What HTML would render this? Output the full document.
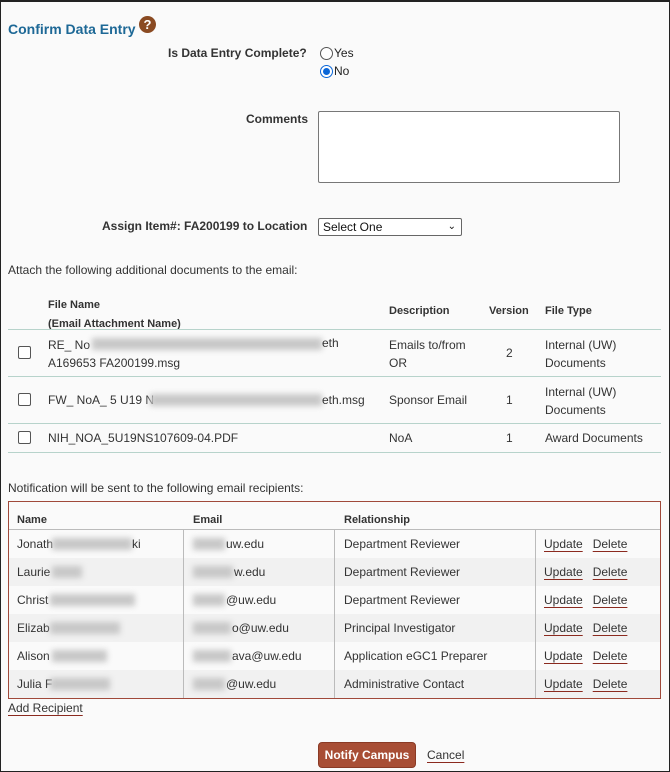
<!DOCTYPE html>
<html><head><style>
*{margin:0;padding:0;box-sizing:border-box}
body{width:670px;height:772px;background:#fafafa;font-family:"Liberation Sans",Arial,sans-serif;font-size:12px;color:#333;position:relative;overflow:hidden}
.frame{position:absolute;left:0;top:0;width:670px;height:772px;border:1px solid #222;border-top:2px solid #222}
.a{position:absolute;white-space:nowrap}
.b{font-weight:bold}
.blur{position:absolute;background:#c8c8c8;filter:blur(3px);height:12px}
.radio{position:absolute;width:13px;height:13px;border:1px solid #555;border-radius:50%;background:#fff}
.cb{position:absolute;width:13px;height:13px;border:1px solid #555;border-radius:2px;background:#fff}
.hl{position:absolute;height:1px;background:#b7d3cb;left:8px;width:653px}
.lnk{color:#333;text-decoration:underline;text-decoration-color:#8b2a1f;text-underline-offset:3px}
.vl{position:absolute;width:1px;background:#bbb}
</style></head><body>
<div class="frame"></div>
<div class="a b" style="left:8px;top:21px;font-size:14px;color:#1d6896">Confirm Data Entry</div>
<div class="a" style="left:139px;top:16px;width:17px;height:17px;border-radius:50%;background:#8a4a22;color:#fff;font-weight:bold;font-size:13px;text-align:center;line-height:17px">?</div>

<div class="a b" style="left:168px;top:46px">Is Data Entry Complete?</div>
<div class="radio" style="left:320px;top:47px"></div>
<div class="a" style="left:334px;top:46px;color:#222">Yes</div>
<div class="radio" style="left:320px;top:65px;border:1px solid #0a66d8;background:#fff"><div style="position:absolute;left:2px;top:2px;width:7px;height:7px;border-radius:50%;background:#0a66d8"></div></div>
<div class="a" style="left:334px;top:64px;color:#222">No</div>

<div class="a b" style="left:246px;top:112px">Comments</div>
<div class="a" style="left:318px;top:111px;width:302px;height:72px;border:1px solid #777;border-radius:2px;background:#fff"></div>

<div class="a b" style="left:102px;top:219px">Assign Item#: FA200199 to Location</div>
<div class="a" style="left:318px;top:218px;width:144px;height:18px;border:1px solid #666;border-radius:2px;background:#fff;color:#111;padding-left:4px;line-height:16px">Select One<span style="position:absolute;right:5px;top:0;font-size:10px">&#x2304;</span></div>

<div class="a" style="left:8px;top:263px">Attach the following additional documents to the email:</div>

<div class="a b" style="left:48px;top:296px;font-size:11px;line-height:19px">File Name<br>(Email Attachment Name)</div>
<div class="a b" style="left:389px;top:305px;font-size:11px">Description</div>
<div class="a b" style="left:489px;top:305px;font-size:11px">Version</div>
<div class="a b" style="left:545px;top:305px;font-size:11px">File Type</div>
<div class="hl" style="top:329px"></div>

<div class="cb" style="left:18px;top:346px"></div>
<div class="a" style="left:48px;top:336px;line-height:18px">RE_ No<br>A169653 FA200199.msg</div>
<div class="blur" style="left:92px;top:338px;width:230px"></div>
<div class="a" style="left:322px;top:336px">eth</div>
<div class="a" style="left:389px;top:336px;line-height:18px">Emails to/from<br>OR</div>
<div class="a" style="left:506px;top:346px">2</div>
<div class="a" style="left:545px;top:336px;line-height:18px">Internal (UW)<br>Documents</div>
<div class="hl" style="top:376px"></div>

<div class="cb" style="left:18px;top:393px"></div>
<div class="a" style="left:48px;top:393px">FW_ NoA_ 5 U19 N</div>
<div class="blur" style="left:150px;top:394px;width:172px"></div>
<div class="a" style="left:322px;top:393px">eth.msg</div>
<div class="a" style="left:389px;top:393px">Sponsor Email</div>
<div class="a" style="left:506px;top:393px">1</div>
<div class="a" style="left:545px;top:383px;line-height:18px">Internal (UW)<br>Documents</div>
<div class="hl" style="top:423px"></div>

<div class="cb" style="left:18px;top:431px"></div>
<div class="a" style="left:48px;top:431px">NIH_NOA_5U19NS107609-04.PDF</div>
<div class="a" style="left:389px;top:431px">NoA</div>
<div class="a" style="left:506px;top:431px">1</div>
<div class="a" style="left:545px;top:431px">Award Documents</div>
<div class="hl" style="top:452px"></div>

<div class="a" style="left:8px;top:481px">Notification will be sent to the following email recipients:</div>

<div class="a" style="left:8px;top:501px;width:653px;height:198px;border:1px solid #a0493a"></div>
<div class="a" style="left:9px;top:558px;width:651px;height:28px;background:#f1f1f1"></div>
<div class="a" style="left:9px;top:614px;width:651px;height:28px;background:#f1f1f1"></div>
<div class="a" style="left:9px;top:670px;width:651px;height:28px;background:#f1f1f1"></div>
<div class="a" style="left:9px;top:529px;width:651px;height:1px;background:#bbb"></div>
<div class="vl" style="left:183px;top:530px;height:168px"></div>
<div class="vl" style="left:334px;top:530px;height:168px"></div>
<div class="vl" style="left:535px;top:530px;height:168px"></div>
<div class="a b" style="left:17px;top:514px;font-size:11px">Name</div>
<div class="a b" style="left:193px;top:514px;font-size:11px">Email</div>
<div class="a b" style="left:344px;top:514px;font-size:11px">Relationship</div>

<div class="a" style="left:17px;top:537px">Jonath</div><div class="blur" style="left:52px;top:538px;width:80px"></div><div class="a" style="left:132px;top:537px">ki</div>
<div class="blur" style="left:193px;top:538px;width:32px"></div><div class="a" style="left:226px;top:537px">uw.edu</div>
<div class="a" style="left:344px;top:537px">Department Reviewer</div>

<div class="a" style="left:17px;top:565px">Laurie</div><div class="blur" style="left:52px;top:566px;width:30px"></div>
<div class="blur" style="left:193px;top:566px;width:40px"></div><div class="a" style="left:234px;top:565px">w.edu</div>
<div class="a" style="left:344px;top:565px">Department Reviewer</div>

<div class="a" style="left:17px;top:593px">Christ</div><div class="blur" style="left:50px;top:594px;width:85px"></div>
<div class="blur" style="left:193px;top:594px;width:32px"></div><div class="a" style="left:226px;top:593px">@uw.edu</div>
<div class="a" style="left:344px;top:593px">Department Reviewer</div>

<div class="a" style="left:17px;top:621px">Elizab</div><div class="blur" style="left:50px;top:622px;width:70px"></div>
<div class="blur" style="left:193px;top:622px;width:38px"></div><div class="a" style="left:232px;top:621px">o@uw.edu</div>
<div class="a" style="left:344px;top:621px">Principal Investigator</div>

<div class="a" style="left:17px;top:649px">Alison</div><div class="blur" style="left:52px;top:650px;width:55px"></div>
<div class="blur" style="left:193px;top:650px;width:38px"></div><div class="a" style="left:232px;top:649px">ava@uw.edu</div>
<div class="a" style="left:344px;top:649px">Application eGC1 Preparer</div>

<div class="a" style="left:17px;top:677px">Julia F</div><div class="blur" style="left:50px;top:678px;width:60px"></div>
<div class="blur" style="left:193px;top:678px;width:32px"></div><div class="a" style="left:226px;top:677px">@uw.edu</div>
<div class="a" style="left:344px;top:677px">Administrative Contact</div>

<div class="a" style="left:544px;top:537px"><span class="lnk">Update</span>&nbsp;&nbsp;&nbsp;<span class="lnk">Delete</span></div>
<div class="a" style="left:544px;top:565px"><span class="lnk">Update</span>&nbsp;&nbsp;&nbsp;<span class="lnk">Delete</span></div>
<div class="a" style="left:544px;top:593px"><span class="lnk">Update</span>&nbsp;&nbsp;&nbsp;<span class="lnk">Delete</span></div>
<div class="a" style="left:544px;top:621px"><span class="lnk">Update</span>&nbsp;&nbsp;&nbsp;<span class="lnk">Delete</span></div>
<div class="a" style="left:544px;top:649px"><span class="lnk">Update</span>&nbsp;&nbsp;&nbsp;<span class="lnk">Delete</span></div>
<div class="a" style="left:544px;top:677px"><span class="lnk">Update</span>&nbsp;&nbsp;&nbsp;<span class="lnk">Delete</span></div>

<div class="a" style="left:8px;top:701px"><span class="lnk">Add Recipient</span></div>

<div class="a b" style="left:318px;top:742px;width:98px;height:26px;background:#a84e35;border:1px solid #8a3a25;border-radius:4px;color:#fff;text-align:center;line-height:24px">Notify Campus</div>
<div class="a" style="left:427px;top:748px"><span class="lnk">Cancel</span></div>
</body></html>
